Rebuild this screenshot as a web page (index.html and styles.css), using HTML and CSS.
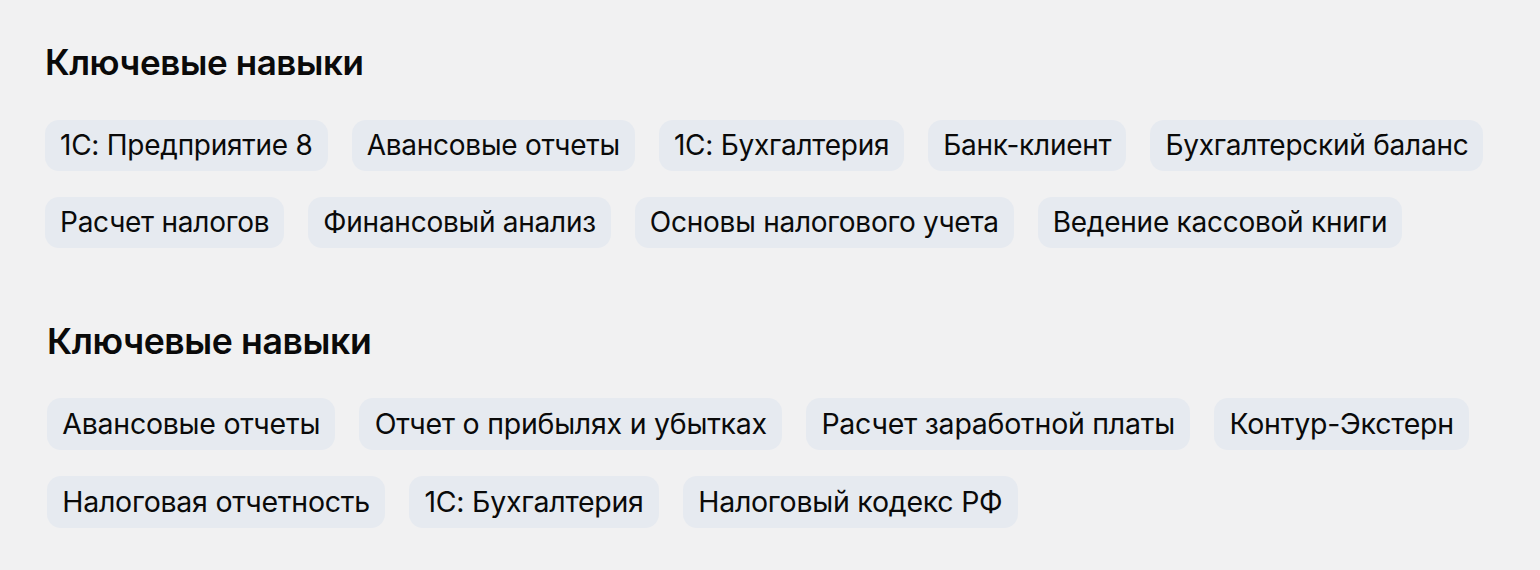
FILE: index.html
```html
<!DOCTYPE html>
<html lang="ru">
<head>
<meta charset="utf-8">
<link rel="stylesheet" href="styles.css">
</head>
<body>
<main class="page">
  <section class="skills">
    <h2 class="skills-title">Ключевые навыки</h2>
    <ul class="chips">
      <li class="chip">1С: Предприятие 8</li>
      <li class="chip">Авансовые отчеты</li>
      <li class="chip">1С: Бухгалтерия</li>
      <li class="chip">Банк-клиент</li>
      <li class="chip">Бухгалтерский баланс</li>
      <li class="chip">Расчет налогов</li>
      <li class="chip">Финансовый анализ</li>
      <li class="chip">Основы налогового учета</li>
      <li class="chip">Ведение кассовой книги</li>
    </ul>
  </section>
  <section class="skills skills-large">
    <h2 class="skills-title">Ключевые навыки</h2>
    <ul class="chips">
      <li class="chip">Авансовые отчеты</li>
      <li class="chip">Отчет о прибылях и убытках</li>
      <li class="chip">Расчет заработной платы</li>
      <li class="chip">Контур-Экстерн</li>
      <li class="chip">Налоговая отчетность</li>
      <li class="chip">1С: Бухгалтерия</li>
      <li class="chip">Налоговый кодекс РФ</li>
    </ul>
  </section>
</main>
</body>
</html>
```
FILE: styles.css
```css
* { box-sizing: border-box; }
html, body { margin: 0; padding: 0; }
body {
  background: #f1f1f2;
  color: #0a0a0a;
  font-family: Inter, "Noto Sans", sans-serif;
}
.page {
  padding: 41px 0 0 45px;
  display: flex;
  flex-direction: column;
  gap: 72px;
}
.skills { --s: 1; --mb: 37px; }
.skills-large { --s: 1.018; --mb: 35px; margin-left: 2px; }
.skills-title {
  margin: 0 0 var(--mb);
  font-size: calc(35px * var(--s));
  line-height: calc(42px * var(--s));
  font-weight: 600;
  letter-spacing: -0.4px;
}
.chips {
  list-style: none;
  margin: 0;
  padding: 0;
  display: flex;
  flex-wrap: wrap;
  gap: 26px 24px;
  max-width: 1480px;
}
.chip {
  background: #e6eaf0;
  border-radius: 14px;
  padding: 0 calc(15px * var(--s));
  height: calc(51px * var(--s));
  line-height: calc(51px * var(--s));
  font-size: calc(28px * var(--s));
  letter-spacing: -0.25px;
}
```
